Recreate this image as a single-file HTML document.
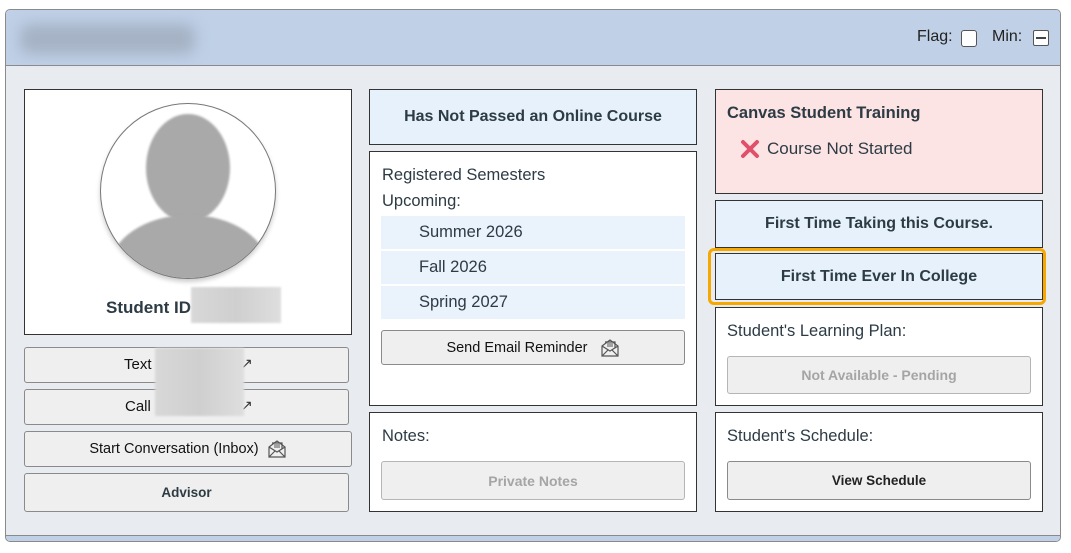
<!DOCTYPE html>
<html><head><meta charset="utf-8"><style>
*{box-sizing:border-box;margin:0;padding:0}
body{width:1071px;height:553px;background:#fff;position:relative;overflow:hidden;font-family:"Liberation Sans",sans-serif;color:#2d3b45}
.a{position:absolute}
.outer{left:5px;top:9px;width:1056px;height:533px;border:1px solid #8a8a8a;border-radius:5px;background:#e8ebf0;overflow:hidden}
.hdr{left:0;top:0;width:1056px;height:56px;background:#bfd0e7;border-bottom:1px solid #8a8a8a}
.foot{left:0;bottom:0;width:1056px;height:6px;background:#bfd0e7;border-top:1px solid #8a8a8a}
.box{border:1.5px solid #333;background:#fff}
.blue{background:#e6f1fc}
.btn{border:1px solid #8a8a8a;border-radius:3px;background:#efefef;font-size:14px;color:#111;text-align:center;display:flex;align-items:center;justify-content:center}
.dis{color:#a5a5a5;font-weight:bold;border-color:#b5b5b5}
.ctr{display:flex;align-items:center;justify-content:center;font-weight:bold;font-size:16px;color:#2d3b45}
.t16{font-size:16.5px;color:#2d3b45}
.row{background:#eaf2fc;font-size:16.5px;padding-left:38px;display:flex;align-items:center}
.blur{background:linear-gradient(90deg,#d8d8d8,#cfcfcf,#dedede);filter:blur(1px)}
</style></head><body>
<div class="a outer">
 <div class="a hdr">
  <div class="a" style="left:14px;top:14px;width:175px;height:30px;background:#a5b2c4;filter:blur(7px);border-radius:10px"></div>
  <div class="a" style="left:911px;top:18px;font-size:16px;color:#222">Flag:</div>
  <div class="a" style="left:955px;top:20px;width:16px;height:17px;border:1px solid #555;border-radius:3px;background:#fff"></div>
  <div class="a" style="left:986px;top:18px;font-size:16px;color:#222">Min:</div>
  <div class="a" style="left:1027px;top:20px;width:16px;height:16px;border:1px solid #555;border-radius:2px;background:#fff"><div class="a" style="left:2px;top:6px;width:10px;height:2px;background:#444"></div></div>
 </div>
 <div class="a foot"></div>
</div>

<!-- left column -->
<div class="a box" style="left:24px;top:89px;width:328px;height:246px">
 <div class="a" style="left:75px;top:13px;width:176px;height:176px;border-radius:50%;border:1px solid #777;background:#fff;overflow:hidden;box-shadow:0 3px 5px rgba(0,0,0,.2)">
  <div class="a" style="left:45px;top:10px;width:84px;height:108px;border-radius:50%;background:#a9a9a9;filter:blur(1px)"></div>
  <div class="a" style="left:8px;top:111px;width:160px;height:110px;border-radius:50% 50% 0 0;background:#a9a9a9;filter:blur(1px)"></div>
 </div>
 <div class="a" style="left:81px;top:208px;font-size:17px;font-weight:bold;color:#2d3b45">Student ID</div>
 <div class="a blur" style="left:166px;top:197px;width:90px;height:36px"></div>
</div>
<div class="a btn" style="left:24px;top:347px;width:325px;height:36px"></div>
<div class="a" style="left:124px;top:356px;font-size:15px;color:#111">Text</div>
<div class="a" style="left:241px;top:355px;font-size:14px;color:#333">&#8599;</div>
<div class="a btn" style="left:24px;top:389px;width:325px;height:36px"></div>
<div class="a" style="left:125px;top:398px;font-size:15px;color:#111">Call</div>
<div class="a" style="left:241px;top:397px;font-size:14px;color:#333">&#8599;</div>
<div class="a blur" style="left:155px;top:348px;width:89px;height:68px"></div>
<div class="a btn" style="left:24px;top:431px;width:328px;height:36px;font-size:14.5px">Start Conversation (Inbox)&nbsp;&nbsp;<svg width="20" height="18" viewBox="0 0 20 18"><path d="M2 7 L10 1 L18 7 V17 H2 Z M2 7 L10 12 L18 7 M2 17 L8 11 M18 17 L12 11" fill="none" stroke="#555" stroke-width="1.2"/><path d="M5 3 H15 V9" fill="none" stroke="#555" stroke-width="1.2"/><path d="M7 5 H13 M7 7 H13" stroke="#555"/></svg></div>
<div class="a btn" style="left:24px;top:473px;width:325px;height:39px;font-weight:bold;font-size:13.5px;color:#2d3b45">Advisor</div>

<!-- middle -->
<div class="a box blue ctr" style="left:369px;top:89px;width:328px;height:56px">Has Not Passed an Online Course</div>
<div class="a box" style="left:369px;top:151px;width:328px;height:255px">
 <div class="a t16" style="left:12px;top:14px">Registered Semesters</div>
 <div class="a t16" style="left:12px;top:40px">Upcoming:</div>
 <div class="a row" style="left:11px;top:64px;width:304px;height:33px">Summer 2026</div>
 <div class="a row" style="left:11px;top:99px;width:304px;height:33px">Fall 2026</div>
 <div class="a row" style="left:11px;top:134px;width:304px;height:33px">Spring 2027</div>
 <div class="a btn" style="left:11px;top:178px;width:304px;height:35px;font-size:14.5px">Send Email Reminder&nbsp;&nbsp;&nbsp;<svg width="20" height="18" viewBox="0 0 20 18"><path d="M2 7 L10 1 L18 7 V17 H2 Z M2 7 L10 12 L18 7 M2 17 L8 11 M18 17 L12 11" fill="none" stroke="#555" stroke-width="1.2"/><path d="M5 3 H15 V9" fill="none" stroke="#555" stroke-width="1.2"/><path d="M7 5 H13 M7 7 H13" stroke="#555"/></svg></div>
</div>
<div class="a box" style="left:369px;top:412px;width:328px;height:100px">
 <div class="a t16" style="left:12px;top:14px">Notes:</div>
 <div class="a btn dis" style="left:11px;top:48px;width:304px;height:39px">Private Notes</div>
</div>

<!-- right -->
<div class="a box" style="left:715px;top:89px;width:328px;height:105px;background:#fde4e4">
 <div class="a" style="left:11px;top:14px;font-size:16.5px;font-weight:bold">Canvas Student Training</div>
 <svg class="a" style="left:24px;top:49px" width="20" height="20" viewBox="0 0 20 20"><path d="M3 3 L17 17 M17 3 L3 17" stroke="#e0506a" stroke-width="4" stroke-linecap="round"/></svg>
 <div class="a t16" style="left:51px;top:49px;font-size:17px">Course Not Started</div>
</div>
<div class="a box blue ctr" style="left:715px;top:200px;width:328px;height:48px">First Time Taking this Course.</div>
<div class="a" style="left:708px;top:248px;width:338px;height:57px;border:3px solid #f6a800;border-radius:6px"></div>
<div class="a box blue ctr" style="left:715px;top:253px;width:328px;height:47px">First Time Ever In College</div>
<div class="a box" style="left:715px;top:307px;width:328px;height:99px">
 <div class="a t16" style="left:11px;top:14px">Student's Learning Plan:</div>
 <div class="a btn dis" style="left:11px;top:48px;width:304px;height:38px">Not Available - Pending</div>
</div>
<div class="a box" style="left:715px;top:412px;width:328px;height:100px">
 <div class="a t16" style="left:11px;top:14px">Student's Schedule:</div>
 <div class="a btn" style="left:11px;top:48px;width:304px;height:39px;font-weight:bold;font-size:13.5px;color:#222">View Schedule</div>
</div>
</body></html>
